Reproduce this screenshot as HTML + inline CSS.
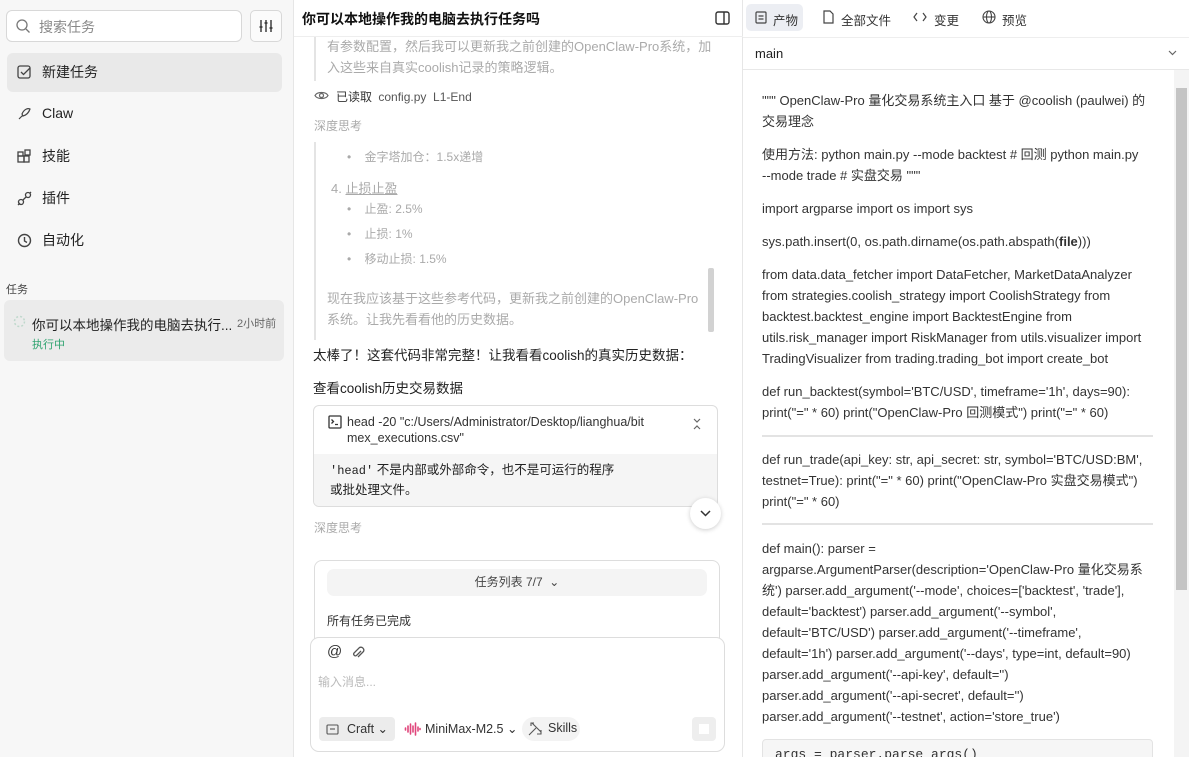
<!DOCTYPE html>
<html><head><meta charset="utf-8"><style>
*{box-sizing:border-box;margin:0;padding:0}
html,body{width:1189px;height:757px;overflow:hidden}
body{background:#fff;font-family:"Liberation Sans","Noto Sans CJK SC",sans-serif;color:#222;position:relative}
.a{position:absolute;white-space:nowrap}
#side{position:absolute;left:0;top:0;width:294px;height:757px;background:#f7f7f7;border-right:1px solid #e6e6e6}
.nav{position:absolute;left:7px;width:275px;height:39px;font-size:14px;color:#222;padding-left:35px;line-height:39px;border-radius:6px}
.nav svg{position:absolute;left:10px;top:12px}
#mid{position:absolute;left:294px;top:0;width:449px;height:757px;border-right:1px solid #e6e6e6}
#right{position:absolute;left:743px;top:0;width:446px;height:757px;overflow:hidden}
.r{position:absolute;left:19px;font-size:13px;color:#333;white-space:nowrap;line-height:21px}
.g{color:#aaa}
</style></head><body>
<div id="side">
 <div class="a" style="left:6px;top:10px;width:236px;height:32px;border:1px solid #d8d8d8;border-radius:6px;background:#fff"></div>
 <svg class="a" style="left:15px;top:18px" width="16" height="16" viewBox="0 0 16 16" fill="none" stroke="#777" stroke-width="1.3"><circle cx="7" cy="7" r="5"/><path d="M11 11l3.5 3.5"/></svg>
 <div class="a" style="left:39px;top:17px;font-size:14px;color:#888">搜索任务</div>
 <div class="a" style="left:250px;top:10px;width:32px;height:32px;border:1px solid #d8d8d8;border-radius:5px;background:#fbfbfb"></div>
 <svg class="a" style="left:258px;top:18px" width="16" height="16" viewBox="0 0 16 16" stroke="#333" stroke-width="1.4" fill="none"><path d="M3 2v12M8 2v12M13 2v12M1.5 9h3M6.5 5h3M11.5 10h3"/></svg>
 <div class="nav" style="top:53px;background:#e9e9e9"><svg width="15" height="15" viewBox="0 0 15 15" fill="none" stroke="#444" stroke-width="1.3"><rect x="1" y="1" width="12" height="12" rx="2"/><path d="M4 7l2.5 2.5L13 3"/></svg>新建任务</div>
 <div class="nav" style="top:94px"><svg width="15" height="15" viewBox="0 0 15 15" fill="none" stroke="#444" stroke-width="1.2"><path d="M2 13l4-4M5 8c2-5 6-6 8-5-1 3-3 6-7 7z"/></svg>Claw</div>
 <div class="nav" style="top:137px"><svg width="15" height="15" viewBox="0 0 15 15" fill="none" stroke="#444" stroke-width="1.3"><rect x="1" y="7" width="6" height="6"/><rect x="7" y="7" width="5" height="6"/><rect x="1" y="3" width="5" height="4"/><rect x="8" y="1" width="5" height="5"/></svg>技能</div>
 <div class="nav" style="top:179px"><svg width="15" height="15" viewBox="0 0 15 15" fill="none" stroke="#444" stroke-width="1.3"><circle cx="4" cy="11" r="2.5"/><circle cx="11" cy="4" r="2.5"/><path d="M1 14l2-2M6 9l3-3M14 1l-1 1"/></svg>插件</div>
 <div class="nav" style="top:221px"><svg width="15" height="15" viewBox="0 0 15 15" fill="none" stroke="#444" stroke-width="1.4"><circle cx="7.5" cy="7.5" r="6"/><path d="M7.5 4v4l2.5 1.5"/></svg>自动化</div>
 <div class="a" style="left:6px;top:281px;font-size:11px;color:#444">任务</div>
 <div class="a" style="left:4px;top:300px;width:280px;height:61px;background:#ebebeb;border-radius:6px"></div>
 <svg class="a" style="left:13px;top:315px" width="13" height="13" viewBox="0 0 13 13" fill="none" stroke="#bfd8cc" stroke-width="1.5" stroke-dasharray="2 2"><circle cx="6.5" cy="6.5" r="5"/></svg>
 <div class="a" style="left:32px;top:314px;font-size:13.5px;color:#222;width:200px;overflow:hidden">你可以本地操作我的电脑去执行...</div>
 <div class="a" style="left:237px;top:315px;font-size:11px;color:#666">2小时前</div>
 <div class="a" style="left:32px;top:336px;font-size:11px;color:#2ea36f">执行中</div>
</div>

<div id="mid">
 <div class="a" style="left:8px;top:9px;font-size:14px;font-weight:bold;color:#111">你可以本地操作我的电脑去执行任务吗</div>
 <svg class="a" style="left:421px;top:11px" width="15" height="14" viewBox="0 0 15 14" fill="none" stroke="#333" stroke-width="1.4"><rect x="1" y="1" width="13" height="12" rx="2"/><path d="M9 1v12"/></svg>
 <div class="a" style="left:0;top:36px;width:449px;border-top:1px solid #eee"></div>
 <div class="a" style="left:20px;top:37px;height:44px;border-left:2px solid #e4e4e4"></div>
 <div class="a g" style="left:33px;top:36px;font-size:13px;line-height:21px">有参数配置，然后我可以更新我之前创建的OpenClaw-Pro系统，加<br>入这些来自真实coolish记录的策略逻辑。</div>
 <svg class="a" style="left:20px;top:89px" width="15" height="13" viewBox="0 0 15 13" fill="none" stroke="#666" stroke-width="1.2"><path d="M1 6.5C3 2.5 12 2.5 14 6.5 12 10.5 3 10.5 1 6.5z"/><circle cx="7.5" cy="6.5" r="2"/></svg>
 <div class="a" style="left:42px;top:88px;font-size:12px;color:#333">已读取 <span style="color:#555;margin-left:3px">config.py&nbsp; L1-End</span></div>
 <div class="a g" style="left:20px;top:117px;font-size:12px">深度思考</div>
 <div class="a" style="left:20px;top:142px;height:198px;border-left:2px solid #e4e4e4"></div>
 <div class="a" style="left:414px;top:268px;width:6px;height:64px;background:#d2d2d2;border-radius:2px"></div>
 <div class="a g" style="left:53px;top:148px;font-size:12px">•&nbsp;&nbsp;&nbsp; 金字塔加仓：1.5x递增</div>
 <div class="a g" style="left:37px;top:178px;font-size:13px">4. <span style="text-decoration:underline">止损止盈</span></div>
 <div class="a g" style="left:53px;top:200px;font-size:12px">•&nbsp;&nbsp;&nbsp; 止盈: 2.5%</div>
 <div class="a g" style="left:53px;top:225px;font-size:12px">•&nbsp;&nbsp;&nbsp; 止损: 1%</div>
 <div class="a g" style="left:53px;top:250px;font-size:12px">•&nbsp;&nbsp;&nbsp; 移动止损: 1.5%</div>
 <div class="a g" style="left:33px;top:288px;font-size:13px;line-height:21px">现在我应该基于这些参考代码，更新我之前创建的OpenClaw-Pro<br>系统。让我先看看他的历史数据。</div>
 <div class="a" style="left:19px;top:344px;font-size:13.5px;color:#222">太棒了！这套代码非常完整！让我看看coolish的真实历史数据：</div>
 <div class="a" style="left:19px;top:377px;font-size:13.5px;color:#222">查看coolish历史交易数据</div>
 <div class="a" style="left:19px;top:405px;width:405px;height:102px;border:1px solid #ddd;border-radius:6px;overflow:hidden">
  <div class="a" style="left:0;top:48px;width:405px;height:54px;background:#f5f5f5"></div>
 </div>
 <svg class="a" style="left:34px;top:415px" width="14" height="14" viewBox="0 0 14 14" fill="none" stroke="#333" stroke-width="1.3"><rect x="1" y="1" width="12" height="12" rx="1"/><path d="M3.5 4.5l2 2-2 2M7 9.5h3"/></svg>
 <div class="a" style="left:53px;top:414px;font-size:12.5px;line-height:16px;color:#333">head -20 "c:/Users/Administrator/Desktop/lianghua/bit<br>mex_executions.csv"</div>
 <svg class="a" style="left:398px;top:417px" width="10" height="14" viewBox="0 0 10 14" fill="none" stroke="#666" stroke-width="1.2"><path d="M2 2l3 3 3-3M2 12l3-3 3 3"/></svg>
 <div class="a" style="left:36px;top:461px;font-size:12.5px;line-height:19px;color:#222"><span style="font-family:'Liberation Mono',monospace;font-size:12px">'head'</span> 不是内部或外部命令，也不是可运行的程序<br>或批处理文件。</div>
 <div class="a" style="left:396px;top:498px;width:31px;height:31px;border-radius:50%;background:#fff;box-shadow:0 1px 5px rgba(0,0,0,.2)"></div>
 <svg class="a" style="left:405px;top:509px" width="13" height="9" viewBox="0 0 13 9" fill="none" stroke="#333" stroke-width="1.5"><path d="M2 2l4.5 4.5L11 2"/></svg>
 <div class="a g" style="left:20px;top:519px;font-size:12px">深度思考</div>
 <div class="a" style="left:20px;top:560px;width:406px;height:90px;border:1px solid #ddd;border-radius:8px"></div>
 <div class="a" style="left:33px;top:569px;width:380px;height:27px;background:#f4f4f4;border-radius:7px;text-align:center;font-size:12px;line-height:27px;color:#444">任务列表 7/7 &nbsp;⌄</div>
 <div class="a" style="left:33px;top:612px;font-size:12px;color:#333">所有任务已完成</div>
 <div class="a" style="left:16px;top:637px;width:415px;height:115px;border:1px solid #ddd;border-radius:9px;background:#fff"></div>
 <div class="a" style="left:33px;top:643px;font-size:15px;color:#333">@</div>
 <svg class="a" style="left:57px;top:645px" width="14" height="15" viewBox="0 0 14 15" fill="none" stroke="#555" stroke-width="1.3"><path d="M10 6l-4.5 4.5a1.8 1.8 0 01-2.5-2.5L8.5 2.5a3 3 0 014 4L7 12"/></svg>
 <div class="a" style="left:24px;top:673px;font-size:12px;color:#bbb">输入消息...</div>
 <div class="a" style="left:25px;top:717px;width:76px;height:24px;background:#ececec;border-radius:4px;font-size:12.5px;line-height:24px;padding-left:28px;color:#333">Craft ⌄</div>
 <svg class="a" style="left:32px;top:723px" width="13" height="12" viewBox="0 0 13 12" fill="none" stroke="#555" stroke-width="1.1"><rect x="1" y="2" width="11" height="9" rx="1"/><path d="M4 6h5"/></svg>
 <svg class="a" style="left:110px;top:721px" width="17" height="16" viewBox="0 0 17 16" stroke="#e0457b" stroke-width="1.6" stroke-linecap="round"><path d="M1.5 7v2M4 5v6M6.5 3v10M9 5v6M11.5 2v12M14 6v4M16 7.5v1"/></svg>
 <div class="a" style="left:131px;top:721px;font-size:12.5px;color:#333">MiniMax-M2.5 ⌄</div>
 <div class="a" style="left:228px;top:717px;width:58px;height:24px;background:#f3f3f3;border-radius:12px"></div>
 <svg class="a" style="left:234px;top:722px" width="14" height="14" viewBox="0 0 14 14" fill="none" stroke="#555" stroke-width="1.1"><path d="M1 13l7-7M4 1l9 9M6 1h-3v3M13 8v4h-4"/></svg>
 <div class="a" style="left:254px;top:721px;font-size:12.5px;color:#333">Skills</div>
 <div class="a" style="left:398px;top:717px;width:24px;height:24px;background:#eee;border-radius:4px"></div>
 <div class="a" style="left:405px;top:724px;width:10px;height:10px;background:#fff"></div>
</div>

<div id="right">
 <div class="a" style="left:3px;top:4px;width:57px;height:27px;background:#eceef3;border-radius:5px"></div>
 <svg class="a" style="left:12px;top:11px" width="12" height="13" viewBox="0 0 12 13" fill="none" stroke="#444" stroke-width="1.2"><rect x="1" y="1" width="10" height="11" rx="1"/><path d="M3.5 5h5M3.5 8h5"/></svg>
 <div class="a" style="left:30px;top:10px;font-size:12.5px;color:#333">产物</div>
 <svg class="a" style="left:80px;top:10px" width="11" height="14" viewBox="0 0 11 14" fill="none" stroke="#444" stroke-width="1.2"><path d="M1 1h6l3 3v9H1z"/></svg>
 <div class="a" style="left:98px;top:10px;font-size:12.5px;color:#333">全部文件</div>
 <svg class="a" style="left:170px;top:12px" width="14" height="10" viewBox="0 0 14 10" fill="none" stroke="#444" stroke-width="1.2"><path d="M4 1L1 5l3 4M10 1l3 4-3 4"/></svg>
 <div class="a" style="left:191px;top:10px;font-size:12.5px;color:#333">变更</div>
 <svg class="a" style="left:239px;top:10px" width="14" height="14" viewBox="0 0 14 14" fill="none" stroke="#444" stroke-width="1.1"><circle cx="7" cy="7" r="6"/><ellipse cx="7" cy="7" rx="2.5" ry="6"/><path d="M1 7h12"/></svg>
 <div class="a" style="left:259px;top:10px;font-size:12.5px;color:#333">预览</div>
 <div class="a" style="left:0;top:37px;width:446px;border-top:1px solid #eee"></div>
 <div class="a" style="left:12px;top:46px;font-size:13px;color:#222">main</div>
 <svg class="a" style="left:425px;top:50px" width="9" height="6" viewBox="0 0 9 6" fill="none" stroke="#666" stroke-width="1.2"><path d="M1 1l3.5 3.5L8 1"/></svg>
 <div class="a" style="left:0;top:69px;width:446px;border-top:1px solid #e8e8e8"></div>
 <div class="a" style="left:431px;top:70px;width:15px;height:687px;background:#f4f4f4"></div>
 <div class="a" style="left:433px;top:88px;width:11px;height:502px;background:#c4c4c4"></div>
 <div class="r" style="top:90px">""" OpenClaw-Pro 量化交易系统主入口 基于 @coolish (paulwei) 的<br>交易理念</div>
 <div class="r" style="top:144px">使用方法: python main.py --mode backtest # 回测 python main.py<br>--mode trade # 实盘交易 """</div>
 <div class="r" style="top:198px">import argparse import os import sys</div>
 <div class="r" style="top:231px">sys.path.insert(0, os.path.dirname(os.path.abspath(<b>file</b>)))</div>
 <div class="r" style="top:264px">from data.data_fetcher import DataFetcher, MarketDataAnalyzer<br>from strategies.coolish_strategy import CoolishStrategy from<br>backtest.backtest_engine import BacktestEngine from<br>utils.risk_manager import RiskManager from utils.visualizer import<br>TradingVisualizer from trading.trading_bot import create_bot</div>
 <div class="r" style="top:381px">def run_backtest(symbol='BTC/USD', timeframe='1h', days=90):<br>print("=" * 60) print("OpenClaw-Pro 回测模式") print("=" * 60)</div>
 <div class="a" style="left:19px;top:435px;width:391px;border-top:2px solid #e3e3e3"></div>
 <div class="r" style="top:449px">def run_trade(api_key: str, api_secret: str, symbol='BTC/USD:BM',<br>testnet=True): print("=" * 60) print("OpenClaw-Pro 实盘交易模式")<br>print("=" * 60)</div>
 <div class="a" style="left:19px;top:523px;width:391px;border-top:2px solid #e3e3e3"></div>
 <div class="r" style="top:538px">def main(): parser =<br>argparse.ArgumentParser(description='OpenClaw-Pro 量化交易系<br>统') parser.add_argument('--mode', choices=['backtest', 'trade'],<br>default='backtest') parser.add_argument('--symbol',<br>default='BTC/USD') parser.add_argument('--timeframe',<br>default='1h') parser.add_argument('--days', type=int, default=90)<br>parser.add_argument('--api-key', default='')<br>parser.add_argument('--api-secret', default='')<br>parser.add_argument('--testnet', action='store_true')</div>
 <div class="a" style="left:19px;top:739px;width:391px;height:30px;background:#f6f6f6;border:1px solid #e3e3e3;border-radius:4px"></div>
 <div class="a" style="left:32px;top:747px;font-family:'Liberation Mono',monospace;font-size:13px;color:#333">args = parser.parse_args()</div>
</div>
</body></html>
